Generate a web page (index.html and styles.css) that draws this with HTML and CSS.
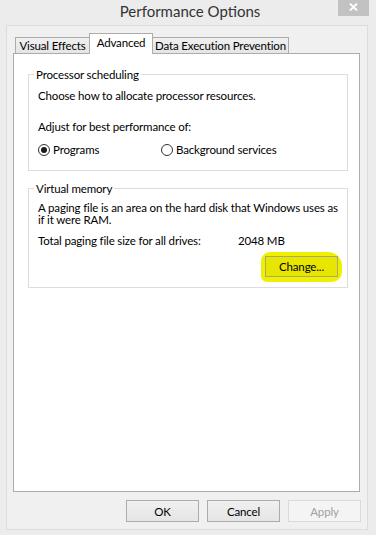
FILE: index.html
```html
<!DOCTYPE html>
<html lang="en">
<head>
    <meta charset="UTF-8">
    <title>Performance Options</title>
    <link rel="stylesheet" href="styles.css">
</head>
<body>
    <div class="window">
        <header class="titlebar">
            <span></span>
            <h1>Performance Options</h1>
            <button class="close-btn" aria-label="Close">
                <svg width="9" height="8" viewBox="0 0 9 8">
                    <path d="M1 0.5 L8 7.5 M8 0.5 L1 7.5" stroke="#fff" stroke-width="1.8" fill="none"/>
                </svg>
            </button>
        </header>

        <div class="client">
            <div class="tabs">
                <div class="tab tab-visual">Visual Effects</div>
                <div class="tab tab-advanced active">Advanced</div>
                <div class="tab tab-dep">Data Execution Prevention</div>
            </div>

            <div class="panel">
                <fieldset class="group group-cpu">
                    <legend>Processor scheduling</legend>
                    <p class="intro">Choose how to allocate processor resources.</p>
                    <p class="adjust">Adjust for best performance of:</p>
                    <div class="radio-row">
                        <label class="radio radio-programs">
                            <input type="radio" name="sched" checked>
                            <span>Programs</span>
                        </label>
                        <label class="radio">
                            <input type="radio" name="sched">
                            <span>Background services</span>
                        </label>
                    </div>
                </fieldset>

                <fieldset class="group group-vm">
                    <legend>Virtual memory</legend>
                    <p class="paging">A paging file is an area on the hard disk that Windows uses as if it were RAM.</p>
                    <div class="size-row">
                        <span class="size-label">Total paging file size for all drives:</span>
                        <span>2048 MB</span>
                    </div>
                    <div class="change-row">
                        <div class="highlight">
                            <button class="btn btn-change">Change...</button>
                        </div>
                    </div>
                </fieldset>
            </div>

            <div class="actions">
                <button class="btn">OK</button>
                <button class="btn">Cancel</button>
                <button class="btn" disabled>Apply</button>
            </div>
        </div>
    </div>
</body>
</html>
```

FILE: styles.css
```css
* {
    margin: 0;
    padding: 0;
    box-sizing: border-box;
}

body {
    background: #ececec;
    font-family: "Segoe UI", Lato, "Noto Sans", sans-serif;
    font-size: 11.5px;
    letter-spacing: -0.15px;
    color: #000;
}

.window {
    width: 376px;
    height: 535px;
    background: #ececec;
    padding: 0 8px 0 6px;
}

.titlebar {
    height: 25px;
    display: grid;
    grid-template-columns: 1fr auto 1fr;
    align-items: start;
}

.titlebar h1 {
    font-size: 15px;
    font-weight: 400;
    letter-spacing: 0;
    color: #333;
    line-height: 22px;
    margin-left: 6px;
}

.close-btn {
    justify-self: end;
    width: 31px;
    height: 16px;
    margin-right: -1px;
    background: #c2c2c2;
    border: none;
    display: flex;
    align-items: center;
    justify-content: center;
    padding-bottom: 3px;
}

.client {
    height: 505px;
    background: #f0f0f0;
    border: 1px solid #dcdcdc;
    padding: 7px 7px 7px 6px;
}

.tabs {
    height: 20px;
    padding-left: 2px;
    display: flex;
    align-items: flex-end;
    position: relative;
    z-index: 1;
}

.tab {
    height: 16px;
    border: 1px solid #acacac;
    border-bottom: none;
    background: linear-gradient(#f0f0f0, #e5e5e5);
    text-align: center;
    line-height: 15px;
    white-space: nowrap;
}

.tab-visual {
    width: 75px;
}

.tab-advanced {
    width: 64px;
    margin-left: -1px;
}

.tab-dep {
    width: 137px;
    margin-left: -1px;
}

.tab.active {
    height: 21px;
    margin-bottom: -1px;
    background: #fff;
    line-height: 17px;
}

.panel {
    width: 347px;
    height: 439px;
    background: #fff;
    border: 1px solid #acacac;
    padding: 13px 11px 0 14px;
}

.group {
    border: 1px solid #dcdcdc;
    padding: 0 4px 0 9px;
}

.group legend {
    margin-left: -4px;
    padding: 0 2px;
    line-height: 15px;
}

.group-cpu {
    padding-top: 6px;
    padding-bottom: 13px;
}

.intro {
    line-height: 15px;
}

.adjust {
    margin-top: 16px;
    line-height: 15px;
}

.radio-row {
    display: flex;
    margin-top: 8px;
    height: 15px;
    align-items: center;
}

.radio {
    display: flex;
    align-items: center;
    gap: 3px;
}

.radio-programs {
    width: 123px;
}

.radio input {
    appearance: none;
    width: 12px;
    height: 12px;
    border: 1px solid #333;
    border-radius: 50%;
    background: #fff;
    display: grid;
    place-items: center;
}

.radio input:checked::after {
    content: "";
    width: 6px;
    height: 6px;
    border-radius: 50%;
    background: #1c1c1c;
}

.group-vm {
    margin-top: 10px;
    padding-top: 6px;
    padding-bottom: 10px;
}

.paging {
    line-height: 12px;
}

.size-row {
    display: flex;
    margin-top: 7px;
    line-height: 15px;
}

.size-label {
    width: 200px;
}

.change-row {
    display: flex;
    justify-content: flex-end;
    margin-top: 8px;
    padding-right: 5px;
}

.highlight {
    background: #eef000;
    padding: 4px 4px 5px 4px;
    margin: -4px -4px -5px 0;
    border-radius: 9px 14px 10px 6px;
}

.btn {
    width: 73px;
    height: 22px;
    border: 1px solid #acacac;
    background: linear-gradient(#f0f0f0, #e5e5e5);
    font: inherit;
    letter-spacing: inherit;
    color: #000;
}

.btn-change {
    display: block;
    height: 21px;
    background: #e6e600;
    border-color: #a8a870;
}

.btn:disabled {
    background: #f4f4f4;
    border-color: #dadada;
    color: #a0a0a0;
}

.actions {
    display: flex;
    justify-content: flex-end;
    gap: 8px;
    margin-top: 8px;
    margin-right: -1px;
}
```
